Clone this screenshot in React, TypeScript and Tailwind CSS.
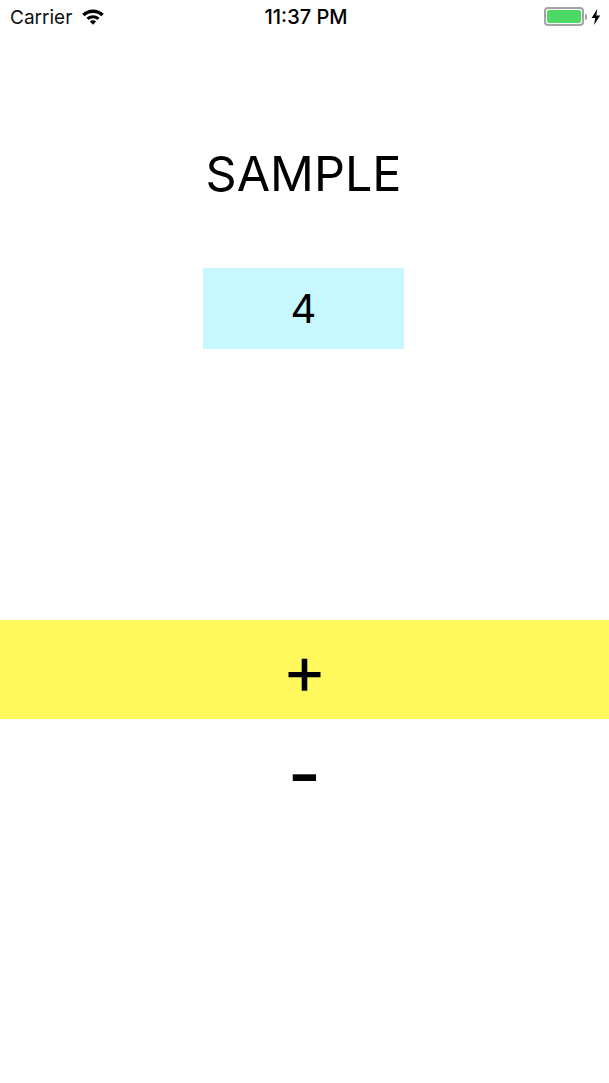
function WifiIcon() {
  return (
    <svg width="24" height="17" viewBox="0 0 24 17" fill="#000">
      <path d="M12 1.5C7.9 1.5 4.2 3.1 1.2 5.8L3.5 8.3C5.7 6.2 8.7 5 12 5s6.3 1.2 8.5 3.3l2.3-2.5C19.8 3.1 16.1 1.5 12 1.5z" />
      <path d="M12 7.2c-2.5 0-4.8 1-6.5 2.6l2.1 2.2c1.1-1.1 2.7-1.8 4.4-1.8s3.3.7 4.4 1.8l2.1-2.2C16.8 8.2 14.5 7.2 12 7.2z" />
      <path d="M12 12.2c-1.2 0-2.3.5-3.1 1.3L12 16.7l3.1-3.2c-.8-.8-1.9-1.3-3.1-1.3z" />
    </svg>
  )
}

function BatteryIcon() {
  return (
    <div className="flex items-center">
      <div className="w-[40px] h-[19px] rounded-[4px] border-2 border-[#a3a3a3] p-[1px] flex">
        <div className="flex-1 rounded-[2px] bg-[#4cd964]" />
      </div>
      <div className="w-[2px] h-[6px] ml-[1px] rounded-r-sm bg-[#a3a3a3]" />
      <svg className="ml-[4px]" width="10" height="16" viewBox="0 0 10 16" fill="#000">
        <path d="M6.2 0L0.6 9h3.6L3 16l6.2-9.6H5.4L6.2 0z" />
      </svg>
    </div>
  )
}

export default function App() {
  return (
    <div className="w-[609px] h-[1083px] bg-white text-black font-['Inter',sans-serif] overflow-hidden">
      {/* Status bar */}
      <div className="relative h-[33px] flex items-center justify-between pl-[10px] pr-[8px]">
        <div className="flex items-center gap-[9px]">
          <span className="pt-[3px] text-[19px] text-[#111]">Carrier</span>
          <WifiIcon />
        </div>
        <span className="absolute left-[3px] right-0 text-center text-[20px] font-medium">11:37 PM</span>
        <BatteryIcon />
      </div>

      <div className="flex flex-col items-center pr-[2px]">
        <h1 className="mt-[109px] h-[64px] leading-[64px] text-[48.5px] font-normal">SAMPLE</h1>
        <div className="mt-[62px] w-[201px] h-[81px] bg-[#c8f8ff] flex items-center justify-center text-[40px]">4</div>
      </div>

      <button className="mt-[271px] block w-full h-[99px] bg-[#fff95e] text-[68px] leading-[99px] font-normal">+</button>
      <button className="block w-full h-[99px] pt-[10px] text-[72px] leading-[87px] font-medium">-</button>
    </div>
  )
}
